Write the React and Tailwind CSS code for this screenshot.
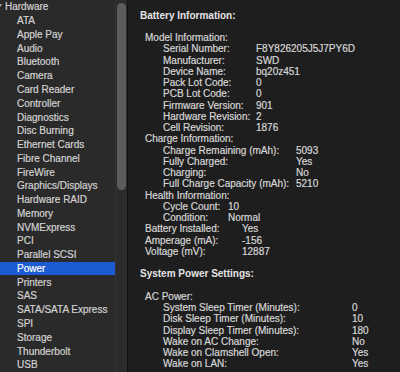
const items = [
  "ATA",
  "Apple Pay",
  "Audio",
  "Bluetooth",
  "Camera",
  "Card Reader",
  "Controller",
  "Diagnostics",
  "Disc Burning",
  "Ethernet Cards",
  "Fibre Channel",
  "FireWire",
  "Graphics/Displays",
  "Hardware RAID",
  "Memory",
  "NVMExpress",
  "PCI",
  "Parallel SCSI",
  "Power",
  "Printers",
  "SAS",
  "SATA/SATA Express",
  "SPI",
  "Storage",
  "Thunderbolt",
  "USB",
];

const model = [
  ["Serial Number:", "F8Y826205J5J7PY6D"],
  ["Manufacturer:", "SWD"],
  ["Device Name:", "bq20z451"],
  ["Pack Lot Code:", "0"],
  ["PCB Lot Code:", "0"],
  ["Firmware Version:", "901"],
  ["Hardware Revision:", "2"],
  ["Cell Revision:", "1876"],
];

const charge = [
  ["Charge Remaining (mAh):", "5093"],
  ["Fully Charged:", "Yes"],
  ["Charging:", "No"],
  ["Full Charge Capacity (mAh):", "5210"],
];

const health = [
  ["Cycle Count:", "10"],
  ["Condition:", "Normal"],
];

const battery = [
  ["Battery Installed:", "Yes"],
  ["Amperage (mA):", "-156"],
  ["Voltage (mV):", "12887"],
];

const acPower = [
  ["System Sleep Timer (Minutes):", "0"],
  ["Disk Sleep Timer (Minutes):", "10"],
  ["Display Sleep Timer (Minutes):", "180"],
  ["Wake on AC Change:", "No"],
  ["Wake on Clamshell Open:", "Yes"],
  ["Wake on LAN:", "Yes"],
];

function Rows({ rows, labelW, indent }) {
  return rows.map(([k, v]) => (
    <div key={k} className={`flex h-[11.26px] items-center ${indent}`}>
      <span className={`shrink-0 ${labelW}`}>{k}</span>
      <span>{v}</span>
    </div>
  ));
}

function Line({ children, className = "" }) {
  return (
    <div className={`flex h-[11.26px] items-center ${className}`}>{children}</div>
  );
}

export default function App() {
  return (
    <div
      className="flex h-[372px] w-[400px] overflow-hidden bg-[#1e1e1e] text-[10px] text-[#d6d6d6] [-webkit-text-stroke:0.2px]"
      style={{ fontFamily: '"Liberation Sans", Arial, sans-serif' }}
    >
      {/* sidebar */}
      <div className="w-[115px] shrink-0 bg-[#2a2a2a] text-[#d2d2d2]">
        <div className="relative flex h-[13.77px] items-center pl-[5px]">
          <span className="absolute left-[-4px] top-[4px] h-0 w-0 border-x-[3px] border-t-[5px] border-x-transparent border-t-[#aaa]" />
          Hardware
        </div>
        {items.map((it) => (
          <div
            key={it}
            className={`flex h-[13.77px] items-center pl-[17px] ${
              it === "Power" ? "bg-[#1b5bd3] text-white" : ""
            }`}
          >
            {it}
          </div>
        ))}
      </div>

      {/* scrollbar */}
      <div className="w-[12px] shrink-0 border-l border-[#333] bg-[#2c2c2c] pl-[1px] pt-[3px]">
        <div className="h-[187px] w-[9px] rounded-full bg-[#5b5b5b]" />
      </div>
      <div className="w-px shrink-0 bg-[#111]" />

      {/* details */}
      <div className="flex-1 pl-[12px] pt-[9.4px]">
        <Line className="font-bold text-[#e4e4e4] [-webkit-text-stroke:0px]">Battery Information:</Line>
        <Line />
        <Line className="pl-[5px]">Model Information:</Line>
        <Rows rows={model} labelW="w-[93px]" indent="pl-[23px]" />
        <Line className="pl-[5px]">Charge Information:</Line>
        <Rows rows={charge} labelW="w-[133px]" indent="pl-[23px]" />
        <Line className="pl-[5px]">Health Information:</Line>
        <Rows rows={health} labelW="w-[65px]" indent="pl-[23px]" />
        <Rows rows={battery} labelW="w-[97px]" indent="pl-[5px]" />
        <Line />
        <Line className="font-bold text-[#e4e4e4] [-webkit-text-stroke:0px]">System Power Settings:</Line>
        <Line />
        <Line className="pl-[5px]">AC Power:</Line>
        <Rows rows={acPower} labelW="w-[189px]" indent="pl-[23px]" />
      </div>
    </div>
  );
}
